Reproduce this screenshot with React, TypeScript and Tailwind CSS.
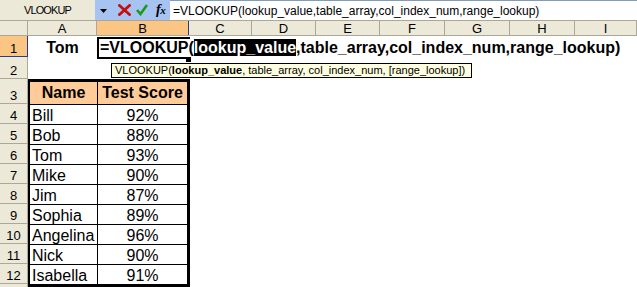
import React from "react";

const colHeaders: { l: string; w: string; sel?: boolean }[] = [
  { l: "A", w: "w-[69px]" },
  { l: "B", w: "w-[92px]", sel: true },
  { l: "C", w: "w-[63px]" },
  { l: "D", w: "w-[64px]" },
  { l: "E", w: "w-[64px]" },
  { l: "F", w: "w-[65px]" },
  { l: "G", w: "w-[65px]" },
  { l: "H", w: "w-[65px]" },
  { l: "I", w: "flex-1" },
];

const rowHeaders: { n: number; h: string }[] = [
  { n: 1, h: "h-[21px]" },
  { n: 2, h: "h-[22px]" },
  { n: 3, h: "h-[25px]" },
  { n: 4, h: "h-[20px]" },
  { n: 5, h: "h-[20px]" },
  { n: 6, h: "h-[20px]" },
  { n: 7, h: "h-[20px]" },
  { n: 8, h: "h-[20px]" },
  { n: 9, h: "h-[20px]" },
  { n: 10, h: "h-[20px]" },
  { n: 11, h: "h-[20px]" },
  { n: 12, h: "h-[20px]" },
  { n: 13, h: "h-[20px]" },
];

const data: [string, string][] = [
  ["Bill", "92%"],
  ["Bob", "88%"],
  ["Tom", "93%"],
  ["Mike", "90%"],
  ["Jim", "87%"],
  ["Sophia", "89%"],
  ["Angelina", "96%"],
  ["Nick", "90%"],
  ["Isabella", "91%"],
];

export default function App() {
  return (
    <div className="w-[637px] h-[287px] overflow-hidden bg-white text-black font-['Liberation_Sans',Arial,sans-serif]">
      {/* Formula bar */}
      <div className="flex h-[21px] bg-[#ece9d8] border-b border-[#aca899]">
        <div className="w-[95px] flex items-center justify-center text-[11px] tracking-[-0.9px] pt-[1px]">
          VLOOKUP
        </div>
        <div className="w-[75px] bg-[#a7c3f1] flex items-center">
          <svg width="7" height="4" viewBox="0 0 7 4" className="ml-[5px] mt-[2px]">
            <polygon points="0,0 7,0 3.5,4" fill="#000" />
          </svg>
          <svg width="13" height="12" viewBox="0 0 13 12" className="ml-[11px]">
            <path d="M1.5 1.5 L11.5 10.5 M11.5 1.5 L1.5 10.5" stroke="#c41010" strokeWidth="2.8" strokeLinecap="square" />
          </svg>
          <svg width="12" height="12" viewBox="0 0 12 12" className="ml-[5px]">
            <path d="M1 6 L4.5 10 L11 1" stroke="#1a9a1a" strokeWidth="2.6" fill="none" />
          </svg>
          <span className="ml-[8px] text-[14px] italic font-bold font-['Liberation_Serif',serif] leading-none tracking-[-0.5px]">
            f<span className="text-[11px]">x</span>
          </span>
        </div>
        <div className="flex-1 bg-white flex items-center pl-[3px] text-[12px] border-t border-[#7f9db9] whitespace-nowrap">
          =VLOOKUP(lookup_value,table_array,col_index_num,range_lookup)
        </div>
      </div>

      {/* Column headers */}
      <div className="flex h-[15px] bg-[#ece9d8] border-b border-[#aca899]">
        <div className="w-[28px] border-r border-[#aca899]" />
        {colHeaders.map((c) => (
          <div
            key={c.l}
            className={
              c.sel
                ? `${c.w} bg-[#fbc684] border-r border-[#2a3a8c] flex items-center justify-center text-[13px] leading-[13px]`
                : `${c.w} border-r border-[#aca899] flex items-center justify-center text-[13px] leading-[13px]`
            }
          >
            {c.l}
          </div>
        ))}
      </div>

      <div className="flex">
        {/* Row headers */}
        <div className="w-[28px] flex flex-col">
          {rowHeaders.map((r) => (
            <div
              key={r.n}
              className={
                r.n === 1
                  ? `${r.h} bg-[#fbc684] border-b border-r border-[#2a3a8c] flex items-end justify-center pb-[1px] text-[13px] leading-[13px]`
                  : `${r.h} bg-[#ece9d8] border-b border-r border-[#aca899] flex items-end justify-center pb-[1px] text-[13px] leading-[13px]`
              }
            >
              {r.n < 13 ? r.n : ""}
            </div>
          ))}
        </div>

        {/* Cells */}
        <div className="flex-1 flex flex-col">
          {/* Row 1 */}
          <div className="flex h-[21px]">
            <div className="w-[69px] flex items-end justify-center text-[16px] font-bold leading-[18px]">
              Tom
            </div>
            <div className="w-[92px] relative flex items-end pl-[3px] text-[16px] font-bold leading-[18px] whitespace-nowrap z-10">
              <div className="absolute left-0 top-[1px] w-[93px] h-[22px] border-2 border-r-0 border-black pointer-events-none" />
              <div className="absolute left-[89px] top-[21px] w-[5px] h-[5px] bg-black" />
              <span className="relative">
                =VLOOKUP(
                <span className="bg-black text-white">lookup_value</span>
                ,table_array,col_index_num,range_lookup)
              </span>
            </div>
          </div>

          {/* Row 2 */}
          <div className="h-[22px] relative">
            <div className="absolute left-[83px] top-[6px] h-[15px] w-[361px] border border-black bg-[#ffffe1] px-[3px] text-[11px] leading-[13px] whitespace-nowrap z-20">
              VLOOKUP(<b>lookup_value</b>, table_array, col_index_num, [range_lookup])
            </div>
          </div>

          {/* Table A3:B12 */}
          <div className="w-[162px] border-t-[3px] border-r-[3px] border-b-[3px] border-l-2 border-black">
            <div className="flex h-[23px] bg-[#ffcc99] border-b border-black text-[16px] font-bold leading-[16px]">
              <div className="w-[68px] border-r border-black flex items-center justify-center">Name</div>
              <div className="flex-1 flex items-center justify-center">Test Score</div>
            </div>
            {data.map(([name, score], i) => (
              <div
                key={name}
                className={
                  i === data.length - 1
                    ? "flex h-[19px] text-[16px] leading-[16px]"
                    : "flex h-[20px] border-b border-black text-[16px] leading-[16px]"
                }
              >
                <div className="w-[68px] border-r border-black flex items-end pl-[2px]">{name}</div>
                <div className="flex-1 flex items-end justify-center">{score}</div>
              </div>
            ))}
          </div>
        </div>
      </div>
    </div>
  );
}
